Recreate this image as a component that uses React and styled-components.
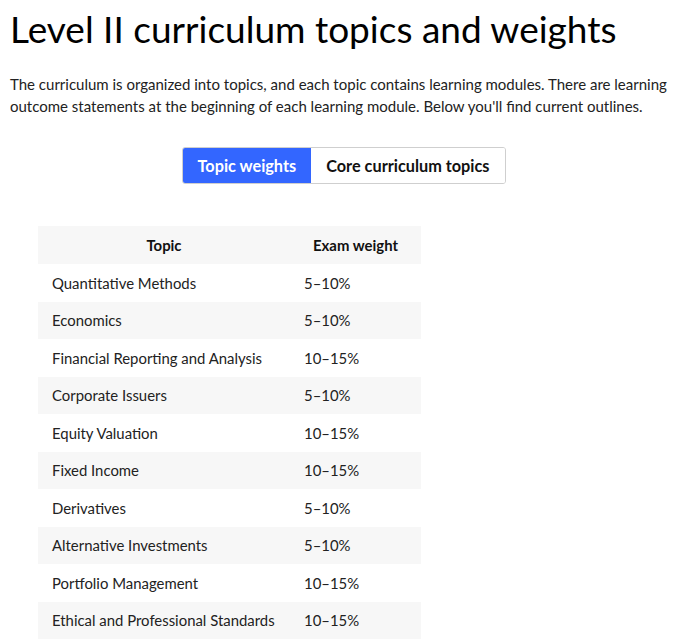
import React from "react";
import styled, { createGlobalStyle } from "styled-components";

const Global = createGlobalStyle`
  html, body { margin: 0; padding: 0; background: #fff; }
  body { font-family: Lato, "Open Sans", sans-serif; color: #111; }
`;

const Page = styled.div`
  padding: 7px 10px 0 10px;
`;

const Title = styled.h1`
  margin: 0;
  font-size: 37px;
  font-weight: 400;
  line-height: 44px;
  color: #000;
`;

const Intro = styled.p`
  margin: 22px 0 0 0;
  font-size: 15px;
  line-height: 22px;
  color: #222;
`;

const TabBar = styled.div`
  display: flex;
  justify-content: center;
  margin-top: 30px;
  padding-left: 10px;
`;

const TabGroup = styled.div`
  display: flex;
  border: 1px solid #cfcfcf;
  border-radius: 3px;
  overflow: hidden;
`;

const Tab = styled.button`
  font-family: inherit;
  font-size: 16.3px;
  font-weight: 700;
  height: 35px;
  padding: 0 15px;
  border: none;
  background: ${(p) => (p.$active ? "#3366ff" : "#fff")};
  color: ${(p) => (p.$active ? "#fff" : "#111")};
  cursor: pointer;
`;

const Table = styled.table`
  margin: 42px 0 0 28px;
  border-collapse: collapse;
  width: 383px;
  font-size: 14.9px;
`;

const TopicCol = styled.col`
  width: 252px;
`;

const HeadCell = styled.th`
  background: #f7f7f7;
  height: 38px;
  padding: 0 14px;
  font-weight: 700;
  text-align: center;
  color: #111;
  white-space: nowrap;
`;

const Row = styled.tr`
  background: ${(p) => (p.$shaded ? "#f7f7f7" : "#fff")};
`;

const Cell = styled.td`
  height: 37.5px;
  padding: 0 14px;
  color: #222;
  white-space: nowrap;
`;

const rows = [
  ["Quantitative Methods", "5–10%"],
  ["Economics", "5–10%"],
  ["Financial Reporting and Analysis", "10–15%"],
  ["Corporate Issuers", "5–10%"],
  ["Equity Valuation", "10–15%"],
  ["Fixed Income", "10–15%"],
  ["Derivatives", "5–10%"],
  ["Alternative Investments", "5–10%"],
  ["Portfolio Management", "10–15%"],
  ["Ethical and Professional Standards", "10–15%"],
];

export default function App() {
  return (
    <Page>
      <Global />
      <Title>Level II curriculum topics and weights</Title>
      <Intro>
        The curriculum is organized into topics, and each topic contains learning modules. There are learning
        outcome statements at the beginning of each learning module. Below you'll find current outlines.
      </Intro>
      <TabBar>
        <TabGroup>
          <Tab $active>Topic weights</Tab>
          <Tab>Core curriculum topics</Tab>
        </TabGroup>
      </TabBar>
      <Table>
        <colgroup>
          <TopicCol />
          <col />
        </colgroup>
        <thead>
          <tr>
            <HeadCell>Topic</HeadCell>
            <HeadCell>Exam weight</HeadCell>
          </tr>
        </thead>
        <tbody>
          {rows.map((r, i) => (
            <Row key={r[0]} $shaded={i % 2 === 1}>
              <Cell>{r[0]}</Cell>
              <Cell>{r[1]}</Cell>
            </Row>
          ))}
        </tbody>
      </Table>
    </Page>
  );
}
